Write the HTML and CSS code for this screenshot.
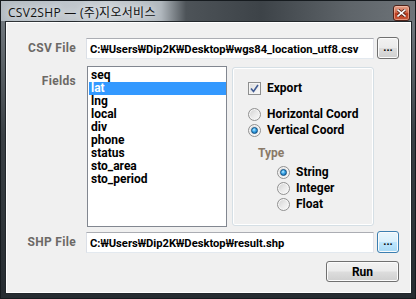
FILE: index.html
```html
<!DOCTYPE html>
<html lang="ko">
<head>
    <meta charset="UTF-8">
    <title>CSV2SHP</title>
    <link rel="stylesheet" href="styles.css">
</head>
<body>
    <div class="window">
        <div class="titlebar">
            <span class="title">CSV2SHP — (주)지오서비스</span>
            <span class="close">
                <svg width="9" height="8" viewBox="0 0 9 8">
                    <path d="M1 1 L8 7 M8 1 L1 7" stroke="#5a2418" stroke-width="3.2" stroke-linecap="square"/>
                    <path d="M1 1 L8 7 M8 1 L1 7" stroke="#fff" stroke-width="1.6" stroke-linecap="square"/>
                </svg>
            </span>
        </div>

        <div class="frame">
            <div class="client">
                <div class="row csv-row">
                    <div class="label">CSV File</div>
                    <div class="path-row">
                        <div class="textbox">C:<span class="won">₩</span>Users<span class="won">₩</span>Dip2K<span class="won">₩</span>Desktop<span class="won">₩</span>wgs84_location_utf8.csv</div>
                        <button class="btn browse">...</button>
                    </div>
                </div>

                <div class="row fields-row">
                    <div class="label fields-label">Fields</div>
                    <ul class="listbox">
                        <li>seq</li>
                        <li class="selected">lat</li>
                        <li>lng</li>
                        <li>local</li>
                        <li>div</li>
                        <li>phone</li>
                        <li>status</li>
                        <li>sto_area</li>
                        <li>sto_period</li>
                    </ul>
                    <div class="group">
                        <div class="option export">
                            <span class="check">
                                <svg width="9" height="9" viewBox="0 0 9 9">
                                    <path d="M1 4.5 L3.5 7.5 L8 1" fill="none" stroke="#3f5a92" stroke-width="1.6"/>
                                </svg>
                            </span>
                            Export
                        </div>
                        <div class="option coord-first"><span class="radio"></span>Horizontal Coord</div>
                        <div class="option"><span class="radio on"></span>Vertical Coord</div>

                        <div class="subgroup">
                            <div class="subgroup-title">Type</div>
                            <div class="option"><span class="radio on"></span>String</div>
                            <div class="option"><span class="radio"></span>Integer</div>
                            <div class="option"><span class="radio"></span>Float</div>
                        </div>
                    </div>
                </div>

                <div class="row shp-row">
                    <div class="label">SHP File</div>
                    <div class="path-row">
                        <div class="textbox">C:<span class="won">₩</span>Users<span class="won">₩</span>Dip2K<span class="won">₩</span>Desktop<span class="won">₩</span>result.shp</div>
                        <button class="btn browse hot">...</button>
                    </div>
                </div>

                <div class="row run-row">
                    <button class="btn run">Run</button>
                </div>
            </div>
        </div>
    </div>
</body>
</html>
```

FILE: styles.css
```css
body {
    margin: 0;
    font-family: Roboto, "Noto Sans CJK KR", sans-serif;
    font-size: 12px;
    background: #23292e;
}

.window {
    width: 416px;
    height: 299px;
    box-sizing: border-box;
    border: 1px solid #161b1f;
    background: linear-gradient(to bottom, #7a8187 0, #3a4045 45%, #262c31 100%);
}

.titlebar {
    height: 20px;
    box-sizing: border-box;
    display: flex;
    justify-content: space-between;
    align-items: flex-end;
    padding: 0 5px 0 7px;
    background: linear-gradient(90deg, #b3bbc2 0, #c6ccd1 110px, #b0b7bd 160px, #4d5358 185px, #3d4348 260px, #5f656a 350px, #6e7479 100%);
}

.title {
    font-family: "Open Sans", "Noto Sans CJK KR", sans-serif;
    line-height: 16px;
    letter-spacing: 0.3px;
    color: #111;
    text-shadow: 0 0 6px #eef2f5, 0 0 10px #e6eaee;
}

.close {
    width: 17px;
    height: 16px;
    box-sizing: border-box;
    border: 1px solid #4e2219;
    border-radius: 3px;
    background: linear-gradient(to bottom, #e4a38d 0, #d26a4c 45%, #b9391d 55%, #c9593a 100%);
    box-shadow: inset 0 0 0 1px rgba(255, 210, 190, 0.5);
    display: flex;
    align-items: center;
    justify-content: center;
}

.frame {
    padding: 0 3px 4px 4px;
}

.client {
    background: #f0f0f0;
    border: 1px solid #22272b;
    box-shadow: inset 0 0 0 1px #fff;
    padding: 15px 12px 11px 0;
}

.row {
    display: flex;
    column-gap: 10px;
}

.label {
    width: 70px;
    flex-shrink: 0;
    text-align: right;
    font-weight: 700;
    letter-spacing: 0.3px;
    color: #6c6966;
    line-height: 22px;
}

.path-row {
    width: 313px;
    display: flex;
    align-items: flex-end;
    column-gap: 3px;
}

.textbox {
    width: 288px;
    height: 21px;
    box-sizing: border-box;
    background: #fff;
    border: 1px solid;
    border-color: #abadb3 #e2e3ea #e3e9ef #dbdfe6;
    padding-left: 3px;
    font-size: 11.2px;
    font-weight: 700;
    line-height: 19px;
    color: #000;
    white-space: nowrap;
    overflow: hidden;
}

.won {
    font-family: "Noto Sans", sans-serif;
}

.btn {
    font-family: Roboto, sans-serif;
    font-size: 12px;
    font-weight: 700;
    color: #000;
    border: 1px solid #707070;
    border-radius: 3px;
    background: linear-gradient(to bottom, #f2f2f2 0, #ebebeb 48%, #dddddd 52%, #cfcfcf 100%);
    box-shadow: inset 0 0 0 1px #fbfbfb;
    padding: 0;
    box-sizing: border-box;
}

.browse {
    width: 22px;
    height: 22px;
    line-height: 16px;
    font-size: 11px;
}

.browse.hot {
    border-color: #3c7fb1;
    background: linear-gradient(to bottom, #eaf6fd 0, #d9f0fc 48%, #bee6fd 52%, #a7d9f5 100%);
}

.fields-row {
    margin-top: 7px;
    column-gap: 0;
}

.fields-label {
    margin-right: 10px;
    line-height: 15px;
    padding-top: 8px;
}

.listbox {
    list-style: none;
    margin: 0 0 0 1px;
    width: 140px;
    height: 161px;
    box-sizing: border-box;
    border: 1px solid #828790;
    background: #fff;
    padding: 2px 0 0 1px;
    font-weight: 700;
}

.listbox li {
    height: 13px;
    line-height: 13px;
    padding-left: 2px;
}

.listbox li.selected {
    background: #3399ff;
    color: #fff;
}

.group {
    margin: 1px 0 0 5px;
    width: 142px;
    height: 159px;
    box-sizing: border-box;
    border: 1px solid #d5dfe5;
    border-radius: 3px;
    box-shadow: inset 0 0 0 1px #fff;
    padding: 12px 0 0 15px;
    font-weight: 700;
}

.option {
    height: 16px;
    display: flex;
    align-items: center;
    column-gap: 6px;
    color: #000;
}

.coord-first {
    margin-top: 10px;
}

.check {
    width: 13px;
    height: 13px;
    box-sizing: border-box;
    border: 1px solid #8e8f8f;
    background: linear-gradient(135deg, #dcdcdc, #fbfbfb);
    box-shadow: inset 0 0 0 1px #f4f4f4;
    display: flex;
    align-items: center;
    justify-content: center;
}

.radio {
    width: 13px;
    height: 13px;
    box-sizing: border-box;
    border-radius: 50%;
    border: 1px solid #919191;
    background: linear-gradient(135deg, #cfcfcf 0, #e9e9e9 50%, #fafafa 100%);
    box-shadow: inset 0 0 0 1px #f6f6f6;
    display: flex;
    align-items: center;
    justify-content: center;
}

.radio.on::after {
    content: "";
    width: 7px;
    height: 7px;
    box-sizing: border-box;
    border-radius: 50%;
    border: 1px solid #0e4f82;
    background: radial-gradient(circle at 40% 35%, #c9efff 0, #49b2f0 35%, #136bb0 85%);
}

.subgroup {
    margin: 8px 0 0 10px;
}

.subgroup-title {
    line-height: 15px;
    color: #8a7a68;
    margin-bottom: 3px;
}

.subgroup .option {
    margin-left: 19px;
}

.shp-row {
    margin-top: 4px;
}

.run-row {
    margin-top: 8px;
    justify-content: flex-end;
}

.run {
    width: 73px;
    height: 21px;
}
```
